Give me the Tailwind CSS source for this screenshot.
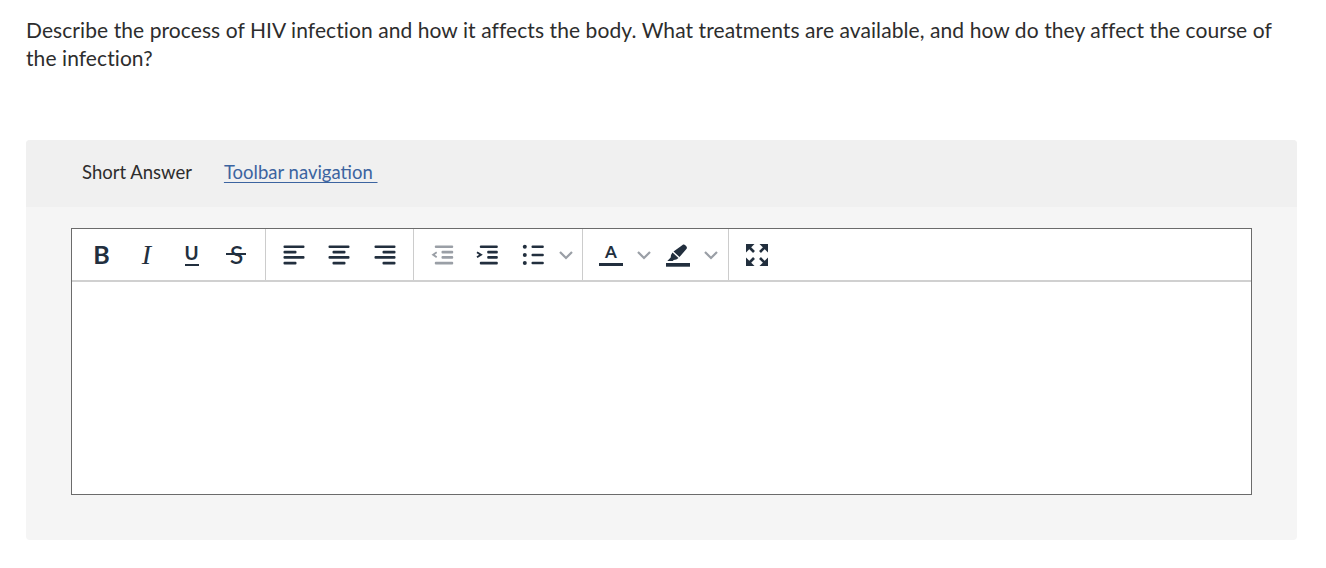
<!DOCTYPE html>
<html lang="en">
<head>
  <meta charset="UTF-8">
  <title>Short Answer</title>
  <script src="https://cdn.jsdelivr.net/npm/@tailwindcss/browser@4"></script>
</head>
<body class="bg-white font-['Lato','Open_Sans',sans-serif] text-[#2d2d2d]">
  <div class="px-[26px] pt-[16px] w-[1326px] h-[568px] overflow-hidden">
    <p class="text-[21px] leading-[28px] h-[84px] pr-[20px] tracking-[0.08px]">Describe the process of HIV infection and how it affects the body. What treatments are available, and how do they affect the course of the infection?</p>

    <div class="mt-[40px] w-[1271px] h-[400px] bg-[#f5f5f5] rounded-[4px] overflow-hidden">
      <div class="h-[67px] bg-[#f0f0f0] pl-[56px] flex items-center gap-[32px] text-[18.5px] pb-[1px]">
        <span>Short Answer</span>
        <a href="#" class="text-[#3c64a0] underline underline-offset-[3px] whitespace-pre">Toolbar navigation </a>
      </div>

      <div class="mt-[21px] ml-[45px] w-[1181px] h-[267px] bg-white border border-[#6b6b6b]">
        <div class="h-[53px] flex border-b-2 border-[#d0d0d0] text-[#222f3e]">
          <!-- text style -->
          <div class="w-[194px] flex pl-[7px] border-r border-[#cccccc]">
            <button class="w-[45px] flex items-center justify-center font-bold text-[25px]">B</button>
            <button class="w-[45px] flex items-center justify-center font-['Liberation_Serif'] italic text-[28px]">I</button>
            <button class="w-[45px] flex items-center justify-center">
              <span class="w-[14px] border-b-[2.500px] border-[#222f3e] text-center text-[19px] leading-[18px] pb-[2px] font-bold">U</span>
            </button>
            <button class="w-[45px] flex items-center justify-center relative">
              <span class="text-[25px] font-medium">S</span>
              <span class="absolute left-[12px] right-[13px] top-[24px] h-[2px] bg-[#222f3e]"></span>
            </button>
          </div>
          <!-- align -->
          <div class="w-[148px] flex pl-[5px] border-r border-[#cccccc]">
            <button class="w-[45.5px] flex items-center justify-center">
              <svg width="24" height="24" viewBox="0 0 24 24" fill="#222f3e"><rect x="1.500" y="2.500" width="21" height="2.600" rx="1"/><rect x="1.500" y="7.800" width="13" height="2.600" rx="1"/><rect x="1.500" y="13.100" width="21" height="2.600" rx="1"/><rect x="1.500" y="18.800" width="13" height="2.600" rx="1"/></svg>
            </button>
            <button class="w-[45.5px] flex items-center justify-center">
              <svg width="24" height="24" viewBox="0 0 24 24" fill="#222f3e"><rect x="1.500" y="2.500" width="21" height="2.600" rx="1"/><rect x="5.500" y="7.800" width="13" height="2.600" rx="1"/><rect x="1.500" y="13.100" width="21" height="2.600" rx="1"/><rect x="5.500" y="18.800" width="13" height="2.600" rx="1"/></svg>
            </button>
            <button class="w-[45.5px] flex items-center justify-center">
              <svg width="24" height="24" viewBox="0 0 24 24" fill="#222f3e"><rect x="1.500" y="2.500" width="21" height="2.600" rx="1"/><rect x="9.500" y="7.800" width="13" height="2.600" rx="1"/><rect x="1.500" y="13.100" width="21" height="2.600" rx="1"/><rect x="9.500" y="18.800" width="13" height="2.600" rx="1"/></svg>
            </button>
          </div>
          <!-- indent and list -->
          <div class="w-[169px] flex pl-[5px] border-r border-[#cccccc]">
            <button class="w-[45px] flex items-center justify-center">
              <svg width="24" height="24" viewBox="0 0 24 24" fill="#9a9fa6"><rect x="4.800" y="2.500" width="18.400" height="2.600" rx="1"/><rect x="11.500" y="7.800" width="11.700" height="2.600" rx="1"/><rect x="11.500" y="13.100" width="11.700" height="2.600" rx="1"/><rect x="4.800" y="18.800" width="18.400" height="2.600" rx="1"/><path d="M6.200 8.500 1.500 11.800l4.700 3.300 1-1.500-2.400-1.800 2.400-1.800z"/></svg>
            </button>
            <button class="w-[45px] flex items-center justify-center">
              <svg width="24" height="24" viewBox="0 0 24 24" fill="#222f3e"><rect x="4.800" y="2.500" width="18" height="2.600" rx="1"/><rect x="12.200" y="7.800" width="10.600" height="2.600" rx="1"/><rect x="12.200" y="13.100" width="10.600" height="2.600" rx="1"/><rect x="4.800" y="18.800" width="18" height="2.600" rx="1"/><path d="M2.500 8.500 7.800 11.800l-5.300 3.300-1-1.500 2.600-1.800-2.600-1.800z"/></svg>
            </button>
            <button class="w-[49px] flex items-center justify-center">
              <svg width="24" height="24" viewBox="0 0 24 24" fill="#222f3e"><circle cx="2.800" cy="3.800" r="2"/><circle cx="2.800" cy="12" r="2"/><circle cx="2.800" cy="20" r="2"/><rect x="9.500" y="2.500" width="12.300" height="2.600" rx="1"/><rect x="9.500" y="10.700" width="12.300" height="2.600" rx="1"/><rect x="9.500" y="18.700" width="12.300" height="2.600" rx="1"/></svg>
            </button>
            <button class="w-[16px] flex items-center justify-center">
              <svg width="16" height="10" viewBox="0 0 16 10" fill="none" stroke="#9a9fa6" stroke-width="2.200"><path d="M2 2l6 6 6-6"/></svg>
            </button>
          </div>
          <!-- colours -->
          <div class="w-[146px] flex pl-[5px] border-r border-[#cccccc]">
            <button class="w-[46px] flex items-center justify-center">
              <span class="w-[24px] mt-[1px] border-b-[3.500px] border-[#222f3e] text-center text-[17px] leading-[16px] pb-[3px] font-bold">A</span>
            </button>
            <button class="w-[20px] flex items-center justify-center">
              <svg width="16" height="10" viewBox="0 0 16 10" fill="none" stroke="#9a9fa6" stroke-width="2.200"><path d="M2 2l6 6 6-6"/></svg>
            </button>
            <button class="w-[47px] flex items-center justify-center">
              <svg width="24" height="24" viewBox="0 0 24 24" fill="#222f3e"><path d="M14.500 3.500l2-1.500c1-.7 2-.5 2.800.3l1 1c.8.900.8 1.900.1 2.800L13.500 14l-6-5.500z"/><path d="M6.500 9.500l6 5.500-2.200 1.600-2.600.4-1 .9H1.300l3.400-3.300.3-2.600z"/><rect x="0" y="20" width="24" height="3.700"/></svg>
            </button>
            <button class="w-[19px] flex items-center justify-center">
              <svg width="16" height="10" viewBox="0 0 16 10" fill="none" stroke="#9a9fa6" stroke-width="2.200"><path d="M2 2l6 6 6-6"/></svg>
            </button>
          </div>
          <!-- fullscreen -->
          <button class="w-[55px] flex items-center justify-center">
            <svg width="24" height="24" viewBox="0 0 24 24" fill="#222f3e" stroke="#222f3e" stroke-width="2.600"><path d="M1 1h8.500L1 9.500z" stroke="none"/><path d="M4 4l5 5"/><path d="M23 1h-8.500L23 9.500z" stroke="none"/><path d="M20 4l-5 5"/><path d="M1 23h8.500L1 14.500z" stroke="none"/><path d="M4 20l5-5"/><path d="M23 23h-8.500L23 14.500z" stroke="none"/><path d="M20 20l-5-5"/></svg>
          </button>
        </div>
      </div>
    </div>
  </div>
</body>
</html>
